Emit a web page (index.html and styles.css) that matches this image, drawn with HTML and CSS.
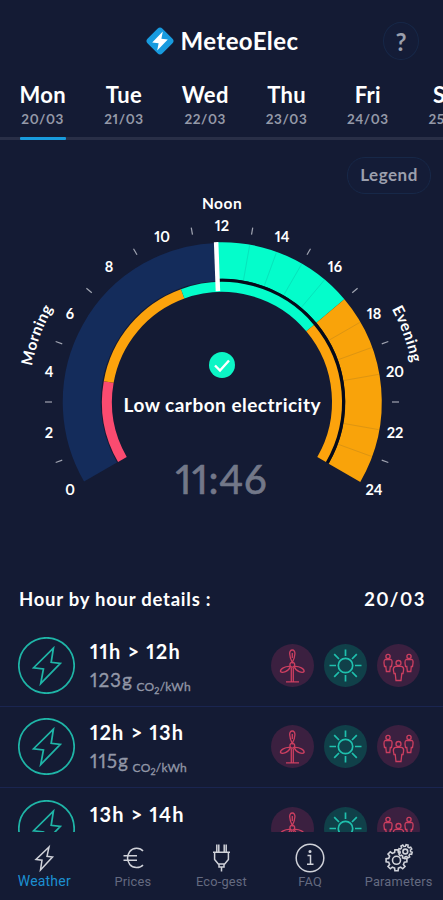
FILE: index.html
```html
<!DOCTYPE html>
<html lang="en">
<head>
  <meta charset="UTF-8" />
  <meta name="viewport" content="width=device-width, initial-scale=1.0"/>
  <title>MeteoElec</title>
  <link rel="stylesheet" href="styles.css">
</head>
<body>
  <!-- Shared icons -->
  <svg class="icon-defs" width="0" height="0">
    <symbol id="bolt" viewBox="0 0 56 56">
      <circle cx="28" cy="28" r="27.2"/>
      <path d="M34.8 11 L15.3 30.2 L25 31.4 L22.3 45.8 L41.6 26 L32.6 24.8 Z"/>
    </symbol>
    <symbol id="wind" viewBox="0 0 43 43">
      <path d="M21.3 18.5 C18 12 17.6 6 21.3 6 C25 6 24.6 12 21.3 18.5 Z M21.3 9 V14 M19.3 22.5 C14 22 9 25 9.5 27.5 C11 29.5 18 27.5 19.3 22.5 Z M23.3 22.5 C28.6 22 33.6 25 33.1 27.5 C31.6 29.5 24.6 27.5 23.3 22.5 Z"/>
      <circle cx="21.3" cy="20.8" r="2.4"/>
      <path d="M20.3 23.5 V37.5 M22.3 23.5 V37.5 M15 37.8 H28"/>
    </symbol>
    <symbol id="sun" viewBox="0 0 43 43">
      <circle cx="21.5" cy="21.5" r="7.2"/>
      <path d="M21.5 5.5 V12 M21.5 31 V37.5 M5.5 21.5 H12 M31 21.5 H37.5 M10.2 10.2 L15 15 M28 28 L32.8 32.8 M10.2 32.8 L15 28 M28 15 L32.8 10.2"/>
    </symbol>
    <symbol id="people" viewBox="0 0 43 43">
      <circle cx="11" cy="12.5" r="2.1"/>
      <path d="M8 15.5 H14 Q15.3 16 15 19 L14.5 22.5 H13.3 L12.8 27.5 H9.4 L8.8 22.5 H7.5 L7 19 Q6.8 16 8 15.5 Z"/>
      <circle cx="32" cy="12.5" r="2.1"/>
      <path d="M29 15.5 H35 Q36.3 16 36 19 L35.5 22.5 H34.3 L33.8 27.5 H30.4 L29.8 22.5 H28.5 L28 19 Q27.8 16 29 15.5 Z"/>
      <circle cx="21.5" cy="19" r="2.5"/>
      <path d="M18.5 22.3 H24.5 Q27 23 26.6 26 L26 29.5 H24.8 L24 36.5 H19 L18.2 29.5 H17 L16.4 26 Q16 23 18.5 22.3 Z"/>
    </symbol>
  </svg>

  <header class="header">
    <div class="brand">
      <svg class="brand-logo" viewBox="0 0 30 30">
        <rect x="4.5" y="4.5" width="21" height="21" rx="3.6" transform="rotate(45 15 15)" fill="#189bdf"/>
        <path d="M17.8 5.5 L7.2 16.4 L13.6 17.2 L12.2 24.5 L22.8 13.6 L16.4 12.8 Z" fill="#fff"/>
      </svg>
      <h1>MeteoElec</h1>
    </div>
    <button type="button" class="help-btn">?</button>
  </header>

  <nav class="days">
    <a class="day active"><b>Mon</b><span>20/03</span></a>
    <a class="day"><b>Tue</b><span>21/03</span></a>
    <a class="day"><b>Wed</b><span>22/03</span></a>
    <a class="day"><b>Thu</b><span>23/03</span></a>
    <a class="day"><b>Fri</b><span>24/03</span></a>
    <a class="day"><b>Sat</b><span>25/03</span></a>
  </nav>

  <main>
    <div class="legend-row">
      <button type="button" class="legend-btn">Legend</button>
    </div>

    <!-- 24h dial: 10 degrees per hour, noon at the top -->
    <svg class="dial" viewBox="-222 -207 443 375">
      <defs>
        <path id="periodArc" d="M-167.6 96.8 A193.5 193.5 0 1 1 167.6 96.8"/>
      </defs>
      <g fill="none">
        <path d="M-121.5 70.1 A140.25 140.25 0 0 1 -5.6 -140.1" stroke="#142c5b" stroke-width="38"/>
        <path d="M-4.9 -141.4 A141.5 141.5 0 0 1 108.4 -91" stroke="#04fdcb" stroke-width="36.5"/>
        <path d="M108.4 -91 A141.5 141.5 0 0 1 122.5 70.8" stroke="#f9a30a" stroke-width="36.5"/>
        <path d="M-4.2 -121.4 A121.5 121.5 0 0 1 105.2 60.7" stroke="#050a1a" stroke-width="3.4"/>
        <path d="M-99.6 57.5 A115 115 0 0 1 -113.3 -20" stroke="#fb4b70" stroke-width="10"/>
        <path d="M-113.3 -20 A115 115 0 0 1 -39.3 -108.1" stroke="#fca30c" stroke-width="10"/>
        <path d="M-39.3 -108.1 A115 115 0 0 1 88.1 -73.9" stroke="#04fdcb" stroke-width="10"/>
        <path d="M88.1 -73.9 A115 115 0 0 1 99.6 57.5" stroke="#fca30c" stroke-width="10"/>
      </g>
      <g class="hour-lines">
        <path d="M0 -124 V-159" transform="rotate(10)"/>
        <path d="M0 -124 V-159" transform="rotate(20)"/>
        <path d="M0 -124 V-159" transform="rotate(30)"/>
        <path d="M0 -124 V-159" transform="rotate(40)"/>
        <path d="M0 -124 V-159" transform="rotate(60)"/>
        <path d="M0 -124 V-159" transform="rotate(70)"/>
        <path d="M0 -124 V-159" transform="rotate(80)"/>
        <path d="M0 -124 V-159" transform="rotate(100)"/>
        <path d="M0 -124 V-159" transform="rotate(110)"/>
      </g>
      <path d="M0 -111 V-160" transform="rotate(-2.1)" stroke="#fff" stroke-width="4.5"/>
      <g class="ticks">
        <path d="M0 -170 V-177" transform="rotate(-110)"/>
        <path d="M0 -170 V-177" transform="rotate(-90)"/>
        <path d="M0 -170 V-177" transform="rotate(-70)"/>
        <path d="M0 -170 V-177" transform="rotate(-50)"/>
        <path d="M0 -170 V-177" transform="rotate(-30)"/>
        <path d="M0 -170 V-177" transform="rotate(-10)"/>
        <path d="M0 -170 V-177" transform="rotate(10)"/>
        <path d="M0 -170 V-177" transform="rotate(30)"/>
        <path d="M0 -170 V-177" transform="rotate(50)"/>
        <path d="M0 -170 V-177" transform="rotate(70)"/>
        <path d="M0 -170 V-177" transform="rotate(90)"/>
        <path d="M0 -170 V-177" transform="rotate(110)"/>
      </g>
      <g class="hours">
        <text x="-152" y="93">0</text>
        <text x="-173" y="35.5">2</text>
        <text x="-173" y="-25.5">4</text>
        <text x="-152" y="-83">6</text>
        <text x="-113" y="-130">8</text>
        <text x="-60" y="-160.5">10</text>
        <text x="0" y="-171">12</text>
        <text x="60" y="-160.5">14</text>
        <text x="113" y="-130">16</text>
        <text x="152" y="-83">18</text>
        <text x="173" y="-25.5">20</text>
        <text x="173" y="35.5">22</text>
        <text x="152" y="93">24</text>
      </g>
      <g class="periods">
        <text><textPath href="#periodArc" startOffset="20.8%">Morning</textPath></text>
        <text x="0" y="-193">Noon</text>
        <text><textPath href="#periodArc" startOffset="79.1%">Evening</textPath></text>
      </g>
      <circle cx="0" cy="-37" r="13" fill="#0cf5c5"/>
      <path d="M-7 -36.5 L-2 -31.5 L7 -41.5" fill="none" stroke="#fff" stroke-width="2.4"/>
      <text class="status" x="0" y="10" textLength="197">Low carbon electricity</text>
      <text class="clock" x="-1" y="91.5" textLength="91">11:46</text>
    </svg>

    <div class="details-head">
      <h2>Hour by hour details :</h2>
      <span>20/03</span>
    </div>

    <div class="hour-list">
      <div class="hour-row">
        <svg class="bolt-icon"><use href="#bolt"/></svg>
        <div class="hour-info">
          <h3>11h &gt; 12h</h3>
          <p>123g <small>CO<sub>2</sub>/kWh</small></p>
        </div>
        <div class="sources">
          <svg class="source red"><use href="#wind"/></svg>
          <svg class="source green"><use href="#sun"/></svg>
          <svg class="source red"><use href="#people"/></svg>
        </div>
      </div>
      <div class="hour-row">
        <svg class="bolt-icon"><use href="#bolt"/></svg>
        <div class="hour-info">
          <h3>12h &gt; 13h</h3>
          <p>115g <small>CO<sub>2</sub>/kWh</small></p>
        </div>
        <div class="sources">
          <svg class="source red"><use href="#wind"/></svg>
          <svg class="source green"><use href="#sun"/></svg>
          <svg class="source red"><use href="#people"/></svg>
        </div>
      </div>
      <div class="hour-row">
        <svg class="bolt-icon"><use href="#bolt"/></svg>
        <div class="hour-info">
          <h3>13h &gt; 14h</h3>
        </div>
        <div class="sources">
          <svg class="source red"><use href="#wind"/></svg>
          <svg class="source green"><use href="#sun"/></svg>
          <svg class="source red"><use href="#people"/></svg>
        </div>
      </div>
    </div>
  </main>

  <footer class="tabbar">
    <a class="tab active">
      <svg viewBox="0 0 30 30"><path d="M20 4 L7 16.5 L13 17.2 L11.5 27 L23.5 14 L18 13.3 Z"/></svg>
      <span>Weather</span>
    </a>
    <a class="tab">
      <svg viewBox="0 0 30 30"><path d="M25 8 C22 4.2 15 4.2 11.8 8.5 C9 12.5 9 17.5 11.8 21.5 C15 25.5 22 25.5 25 22 M5.5 12.8 H19 M5.5 17.2 H19"/></svg>
      <span>Prices</span>
    </a>
    <a class="tab">
      <svg viewBox="0 0 30 30"><path d="M10.8 1.5 V9 M12.8 1.5 V9 M18.2 1.5 V9 M20.2 1.5 V9 M7 9.3 H24 M8.6 9.3 V16.5 L12.3 21 H18.7 L22.4 16.5 V9.3 M13 21 V24 H18 V21 M15.5 24 V28.5"/></svg>
      <span>Eco-gest</span>
    </a>
    <a class="tab">
      <svg viewBox="0 0 30 30"><circle cx="15" cy="15" r="13.8"/><path d="M12.5 12.5 H15.5 V21 M12 21.3 H18.5"/><circle cx="15" cy="8.5" r=".8"/></svg>
      <span>FAQ</span>
    </a>
    <a class="tab">
      <svg viewBox="0 0 30 30">
        <defs>
          <path id="gear" d="M-1.9 -7.8 L-1.6 -10.4 H1.6 L1.9 -7.8 L4.2 -6.9 L6.2 -8.5 L8.5 -6.2 L6.9 -4.2 L7.8 -1.9 L10.4 -1.6 V1.6 L7.8 1.9 L6.9 4.2 L8.5 6.2 L6.2 8.5 L4.2 6.9 L1.9 7.8 L1.6 10.4 H-1.6 L-1.9 7.8 L-4.2 6.9 L-6.2 8.5 L-8.5 6.2 L-6.9 4.2 L-7.8 1.9 L-10.4 1.6 V-1.6 L-7.8 -1.9 L-6.9 -4.2 L-8.5 -6.2 L-6.2 -8.5 L-4.2 -6.9 Z"/>
        </defs>
        <g class="gears">
          <use href="#gear" transform="translate(12.5 17.3)"/>
          <circle cx="12.5" cy="17.3" r="4"/>
          <use class="small-gear" href="#gear" transform="translate(21.3 8.5) rotate(15) scale(.66)"/>
          <circle cx="21.3" cy="8.5" r="2.4"/>
        </g>
      </svg>
      <span>Parameters</span>
    </a>
  </footer>
</body>
</html>
```
FILE: styles.css
```css
* {
  box-sizing: border-box;
}

body {
  margin: 0;
  height: 900px;
  display: flex;
  flex-direction: column;
  overflow: hidden;
  background-color: #141b34;
  color: #fff;
  font-family: Lato, sans-serif;
  font-variant-numeric: proportional-nums;
}

h1, h2, h3, p {
  margin: 0;
}

button {
  background-color: #141c37;
  border: 1px solid #172848;
  font-family: inherit;
  font-weight: 700;
  color: #9b9fad;
  padding: 0;
}

.icon-defs {
  position: absolute;
}

.header {
  display: grid;
  grid-template-columns: 60px 1fr 60px;
  align-items: center;
  height: 82px;
  flex: none;
}

.brand {
  grid-column: 2;
  display: flex;
  justify-content: center;
  align-items: center;
  gap: 6px;
}

.brand-logo {
  width: 30px;
  height: 30px;
}

.brand h1 {
  font-size: 24px;
  line-height: 30px;
  font-weight: 700;
  letter-spacing: 0.4px;
}

.help-btn {
  width: 36px;
  height: 38px;
  border-radius: 50%;
  font-size: 24px;
}

.days {
  display: flex;
  flex: none;
  height: 58px;
  padding-left: 2px;
  overflow: hidden;
  box-shadow: inset 0 -3px #292f47;
}

.day {
  flex: none;
  width: 81.3px;
  text-align: center;
}

.day b {
  display: block;
  font-size: 22px;
  line-height: 26px;
  letter-spacing: 0.3px;
}

.day span {
  display: block;
  font-size: 13.5px;
  line-height: 22px;
  font-weight: 700;
  letter-spacing: 0.6px;
  color: #9499a8;
}

.day.active::after {
  content: "";
  display: block;
  width: 46px;
  height: 3px;
  margin: 7px auto 0;
  border-radius: 1px;
  background-color: #189bdd;
}

main {
  flex: 1;
  min-height: 0;
  display: flex;
  flex-direction: column;
  overflow: hidden;
}

.legend-row {
  display: flex;
  justify-content: flex-end;
  height: 55px;
  padding: 17px 12px 0 0;
  flex: none;
}

.legend-btn {
  width: 84px;
  height: 37px;
  padding-bottom: 3px;
  border-radius: 18px;
  font-size: 17px;
  letter-spacing: 0.5px;
}

.dial {
  width: 443px;
  height: 375px;
  flex: none;
  overflow: visible;
}

.dial text {
  text-anchor: middle;
  fill: #fff;
}

.hours text {
  font-size: 14.5px;
  font-weight: 700;
}

.periods text {
  font-size: 15.5px;
  font-weight: 700;
  letter-spacing: 0.5px;
}

.hour-lines path {
  stroke: #17304a;
  stroke-width: 0.5;
  opacity: 0.22;
}

.ticks path {
  stroke: #a0a4b1;
  stroke-width: 1.2;
}

.dial .status {
  font-size: 19px;
  font-weight: 700;
}

.dial .clock {
  font-size: 40px;
  fill: #737889;
  stroke: #737889;
  stroke-width: 0.7;
}

.details-head {
  display: flex;
  justify-content: space-between;
  align-items: center;
  height: 55px;
  padding: 3px 17px 0 19px;
  flex: none;
}

.details-head h2 {
  font-size: 18.5px;
  font-weight: 700;
  letter-spacing: 0.75px;
}

.details-head span {
  font-size: 18.5px;
  font-weight: 700;
  letter-spacing: 1.5px;
}

.hour-row {
  display: flex;
  align-items: center;
  height: 81.5px;
  padding: 0 23px 0 18px;
  border-bottom: 1px solid #1a2550;
}

.bolt-icon {
  width: 57px;
  height: 57px;
  fill: none;
  stroke: #1fb5a7;
  stroke-width: 1.7;
}

.hour-info {
  height: 55px;
  margin-left: 15px;
}

.hour-info h3 {
  font-size: 20px;
  line-height: 27px;
  letter-spacing: 1.2px;
}

.hour-info p {
  font-size: 19px;
  line-height: 29px;
  letter-spacing: 0.9px;
  color: #9297a7;
  white-space: nowrap;
  -webkit-text-stroke: 0.3px #9297a7;
}

.hour-info small {
  position: relative;
  top: 4px;
  margin-left: -2px;
  font-size: 12px;
  letter-spacing: 0.2px;
}

.hour-info sub {
  font-size: 9px;
  line-height: 0;
}

.sources {
  display: flex;
  gap: 10px;
  margin-left: auto;
}

.source {
  width: 43px;
  height: 43px;
  border-radius: 50%;
  fill: none;
  stroke-width: 1.3;
}

.source.red {
  background-color: #3b2040;
  stroke: #cc3f60;
}

.source.green {
  background-color: #104049;
  stroke: #1fc0ad;
  stroke-width: 1.7;
}

.tabbar {
  display: flex;
  flex: none;
  height: 68px;
  padding-top: 11px;
  background-color: #141b34;
  font-family: Roboto, sans-serif;
}

.tab {
  flex: 1;
  display: flex;
  flex-direction: column;
  align-items: center;
  font-size: 12.8px;
  letter-spacing: 0.2px;
  color: #646a80;
}

.tab svg {
  width: 30px;
  height: 30px;
  fill: none;
  stroke: #d0d2d9;
  stroke-width: 1.5;
}

.tab .gears {
  fill: #141b34;
  stroke-width: 1.6;
}

.tab .small-gear {
  stroke-width: 2.3;
}

.tab span {
  line-height: 17px;
}

.tab.active {
  font-size: 14px;
  color: #1c8fd1;
}
```
